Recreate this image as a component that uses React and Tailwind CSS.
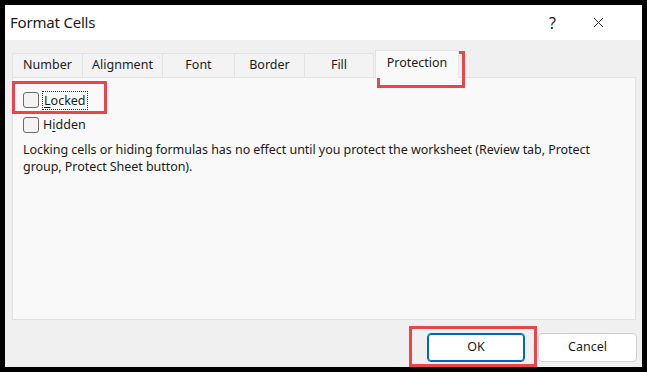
import { X } from 'lucide-react'

const tabs = [
  { label: 'Number', w: 'w-[71px]' },
  { label: 'Alignment', w: 'w-[81px]' },
  { label: 'Font', w: 'w-[73px]' },
  { label: 'Border', w: 'w-[71px]' },
  { label: 'Fill', w: 'w-[70px]' },
]

const Checkbox = () => (
  <span className="w-[16px] h-[16px] rounded-[3px] border border-[#6b6b6b] bg-[#f3f3f3] shrink-0" />
)

const App = () => {
  return (
    <div
      className="relative w-[647px] h-[372px] bg-black p-[5px] text-[#1b1b1b]"
      style={{ fontFamily: '"Noto Sans", "Open Sans", sans-serif' }}
    >
      <div className="h-full flex flex-col bg-[#f0f0f0]">
        {/* title bar */}
        <div className="h-[35px] bg-white flex items-center pl-[5px] pr-[35px] shrink-0">
          <span className="text-[15px] tracking-[-0.2px]">Format Cells</span>
          <span className="ml-auto text-[16px] text-[#222] mr-[34px]">?</span>
          <X size={17} strokeWidth={1.3} className="text-[#222]" />
        </div>

        {/* tabs */}
        <div className="flex items-end pl-[7px] mt-[9px] h-[28px] shrink-0">
          {tabs.map((t) => (
            <div
              key={t.label}
              className={`${t.w} h-[24px] bg-[#f3f3f3] border border-b-0 border-[#e3e3e3] -ml-px first:ml-0 flex items-center justify-center text-[12.5px]`}
            >
              {t.label}
            </div>
          ))}
          <div className="w-[84px] h-[28px] ml-[1px] bg-[#f9f9f9] border border-b-0 border-[#e3e3e3] flex items-start justify-center pt-[3px] text-[12.5px] relative z-10 -mb-px">
            Protection
          </div>
        </div>

        {/* panel */}
        <div className="mx-[7px] mr-[6px] h-[243px] bg-[#f9f9f9] border border-[#e1e1e1] pl-[10px] pt-[12px] text-[12.5px]">
          <div className="flex items-center gap-[3px] h-[20px]">
            <Checkbox />
            <span className="border border-dotted border-[#333] px-px leading-[17px]">
              <span className="underline underline-offset-2">L</span>ocked
            </span>
          </div>
          <div className="flex items-center gap-[4px] h-[20px] mt-[5px]">
            <Checkbox />
            <span>
              H<span className="underline underline-offset-2">i</span>dden
            </span>
          </div>
          <p className="mt-[6px] leading-[17px] w-[610px] tracking-[-0.05px]">
            Locking cells or hiding formulas has no effect until you protect the worksheet (Review tab, Protect
            <br />
            group, Protect Sheet button).
          </p>
        </div>

        {/* buttons */}
        <div className="flex justify-end gap-[13px] mt-[13px] pr-[5px]">
          <button className="w-[98px] h-[29px] rounded-[4px] border border-[#0067c0] bg-white text-[12.5px] shadow-[inset_0_0_0_1px_#0067c0]">
            OK
          </button>
          <button className="w-[99px] h-[29px] rounded-[4px] border border-[#d0d0d0] bg-white text-[12.5px]">
            Cancel
          </button>
        </div>
      </div>

      {/* annotation boxes */}
      <div className="absolute left-[377px] top-[51px] w-[88px] h-[37px] border-[3px] border-[#e8464a]" />
      <div className="absolute left-[12px] top-[81px] w-[95px] h-[33px] border-[3px] border-[#e8464a]" />
      <div className="absolute left-[409px] top-[326px] w-[128px] h-[41px] border-[3px] border-[#e8464a]" />
    </div>
  )
}

export default App
